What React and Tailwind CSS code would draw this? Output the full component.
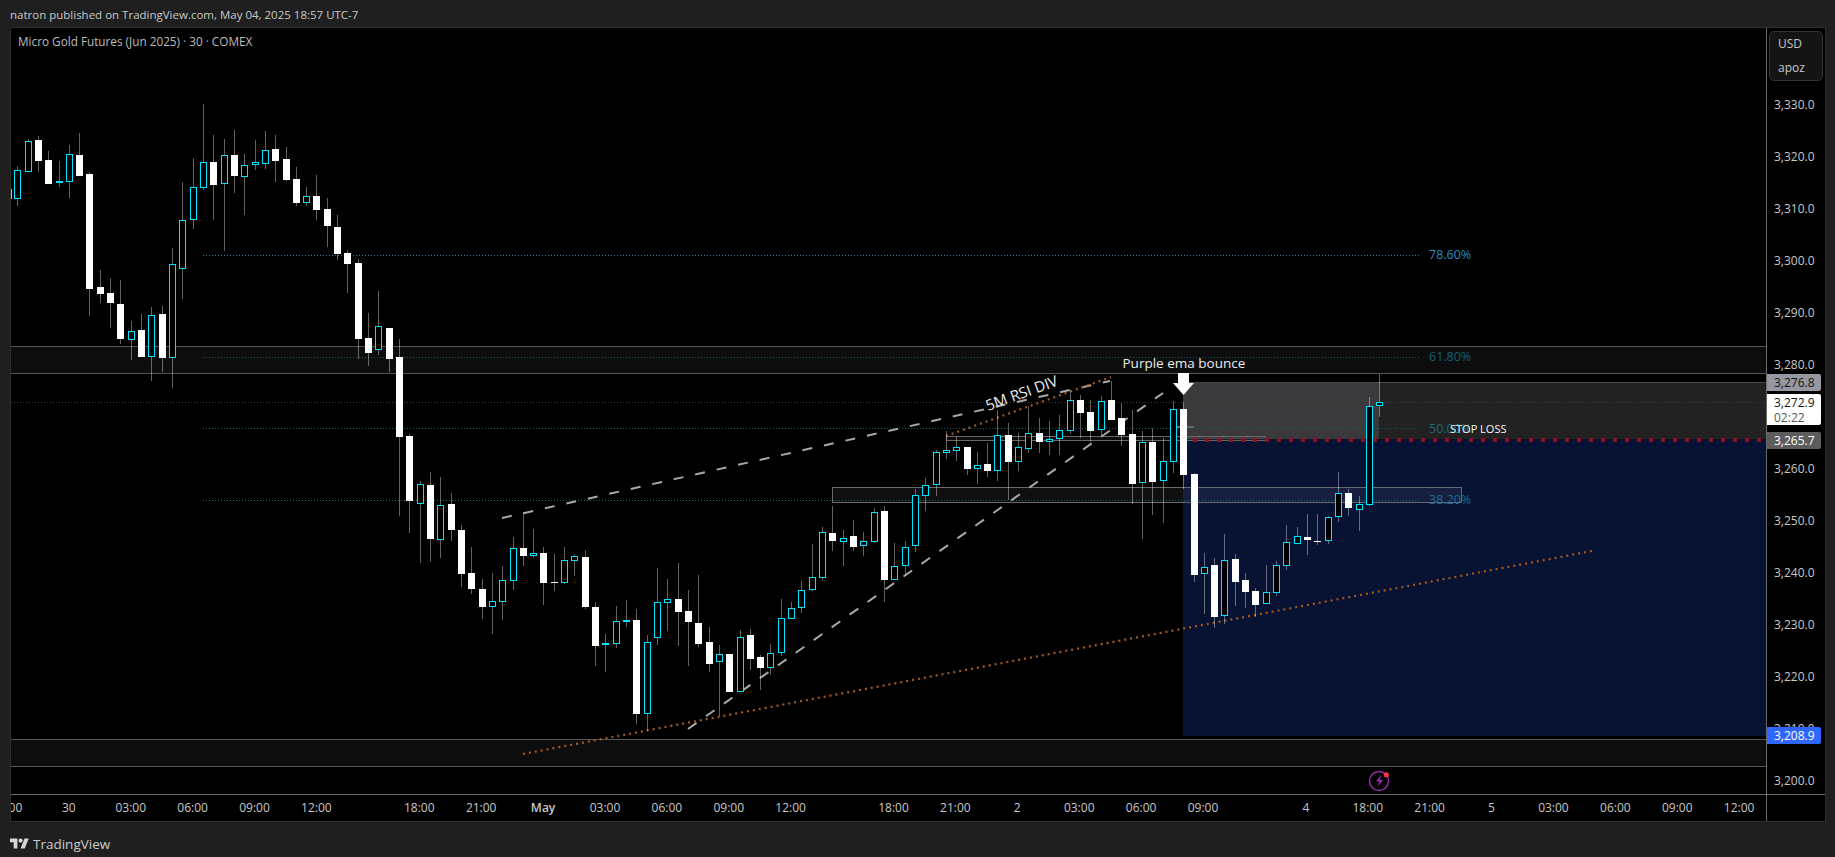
import React from 'react';

// wick top, body top, body bottom, wick bottom, 1 = up candle
const candles = [
  [166,170,199,206,1],[139,141,172,172,1],[136,140,161,172,0],[151,160,184,184,0],[161,181,183,187,1],
  [145,154,182,198,1],[133,155,176,176,0],[172,174,289,316,0],[270,287,294,303,0],[278,293,303,328,0],
  [280,304,339,344,0],[321,331,340,360,1],[314,330,357,357,0],[307,315,357,381,1],[306,314,358,372,0],
  [248,264,358,388,1],[182,220,269,299,1],[158,187,220,229,1],[104,162,188,190,1],[135,162,185,220,0],
  [139,155,184,251,1],[130,155,176,193,0],[154,165,177,215,1],[140,162,165,170,1],[131,150,164,169,1],
  [135,149,161,182,0],[147,159,180,181,0],[167,179,203,206,0],[187,196,203,206,1],[175,196,210,220,0],
  [198,209,226,247,0],[215,227,254,260,0],[250,253,264,293,0],[259,263,339,359,0],[313,338,353,366,0],
  [291,326,350,355,1],[328,328,359,372,0],[339,357,437,516,0],[434,436,501,533,0],[481,484,504,563,1],
  [472,485,539,562,0],[477,505,540,558,1],[493,504,530,541,0],[525,530,574,587,0],[547,573,589,594,0],
  [579,589,607,619,0],[573,601,607,634,1],[566,580,602,620,1],[537,548,581,590,1],[512,548,556,566,0],
  [529,553,556,558,1],[547,553,583,605,0],[554,582,583,591,0],[547,560,583,584,1],[555,556,561,576,1],
  [550,557,607,609,0],[602,607,646,666,0],[634,643,645,672,1],[606,621,644,648,1],[600,620,622,627,1],
  [609,620,714,724,0],[635,642,714,731,1],[568,602,638,645,1],[579,599,603,631,1],[563,599,612,646,0],
  [590,611,622,666,0],[575,623,644,647,0],[627,642,664,672,0],[645,654,662,716,1],[654,654,692,692,0],
  [630,637,692,692,1],[629,635,659,670,0],[655,657,668,690,0],[644,653,668,675,1],[599,618,653,656,1],
  [602,608,619,619,1],[581,590,608,613,1],[544,577,590,591,1],[527,532,578,580,1],[506,533,541,551,0],
  [530,538,542,566,1],[520,536,547,551,0],[532,541,546,556,1],[508,512,542,543,1],[506,511,580,602,0],
  [543,566,580,580,1],[541,547,566,575,1],[489,495,546,552,1],[478,485,496,511,1],[450,452,485,496,1],
  [431,450,453,459,1],[437,447,451,461,1],[447,447,469,475,0],[452,465,469,484,1],[443,464,471,477,0],
  [410,435,471,481,1],[423,435,462,500,0],[433,447,462,471,1],[406,433,449,453,1],[418,433,442,453,0],
  [421,439,442,455,1],[415,430,439,455,1],[391,400,431,434,1],[395,400,413,438,0],[400,412,431,442,0],
  [396,401,430,436,1],[381,400,420,420,0],[403,418,435,446,0],[410,434,484,504,0],[431,442,483,539,1],
  [428,442,482,515,0],[438,461,481,523,1],[401,409,462,473,1],[402,409,475,489,0],[473,474,575,582,0],
  [553,567,574,614,1],[558,565,617,628,0],[534,560,616,624,1],[554,559,582,606,0],[573,580,592,608,0],
  [588,591,605,617,0],[565,592,604,603,1],[561,565,593,596,1],[525,542,566,570,1],[527,536,544,544,1],
  [514,537,540,555,0],[514,541,542,545,0],[516,517,541,544,1],[472,493,517,522,1],[489,493,508,516,0],
  [496,504,510,531,1],[397,406,505,506,1],[374,402,406,417,1],
];

// 3,270.0 sits behind the live price tag in the chart, so its row stays empty
const prices = ['3,330.0','3,320.0','3,310.0','3,300.0','3,290.0','3,280.0','','3,260.0','3,250.0','3,240.0','3,230.0','3,220.0','3,210.0','3,200.0'];

const timeGroups = [
  ['12:00','30','03:00','06:00','09:00','12:00'],
  ['18:00','21:00','May','03:00','06:00','09:00','12:00'],
  ['18:00','21:00','2','03:00','06:00','09:00'],
  ['4','18:00','21:00','5','03:00','06:00','09:00','12:00'],
];

const fibs = [
  { y: 255, color: '#2a7ea6', label: '78.60%', labelY: 259, labelColor: '#2a8cc0' },
  { y: 357, color: '#0d5f66', label: '61.80%', labelY: 361, labelColor: '#0f6272' },
  { y: 428, color: '#0f5f66', label: '50.00%', labelY: 433, labelColor: '#1a6a78' },
  { y: 500, color: '#0f6a76', label: '38.20%', labelY: 504, labelColor: '#1b6f98' },
];

const stopDots = Array.from({ length: 48 }, (_, i) => 1193 + i * 12);

const Candle = ({ data, index }) => {
  const [wickTop, bodyTop, bodyBottom, wickBottom, up] = data;
  const x = Math.round(17.25 + 10.318 * index);
  return (
    <g>
      <rect x={x} y={wickTop} width="1" height={wickBottom - wickTop} fill="#ffffff" fillOpacity="0.38" />
      {up ? (
        <rect x={x - 2.5} y={bodyTop + 0.5} width="6" height={Math.max(bodyBottom - bodyTop - 1, 1)} fill="#000000" stroke="#00e5ff" />
      ) : (
        <rect x={x - 3} y={bodyTop} width="7" height={Math.max(bodyBottom - bodyTop, 1)} fill="#ffffff" />
      )}
    </g>
  );
};

const ChartDrawing = () => (
  <svg className="block" width="1755" height="766" viewBox="11 28 1755 766">
    {/* zones */}
    <g shapeRendering="crispEdges">
      <rect x="11" y="346" width="1755" height="27" fill="#0d0d0d" />
      <rect x="11" y="739" width="1755" height="27" fill="#0d0d0d" />
      <rect x="1183" y="382" width="196" height="57" fill="#3a3a3d" />
      <rect x="1379" y="382" width="387" height="57" fill="#222222" />
      <rect x="1183" y="382" width="583" height="1" fill="#4a4a4a" />
      <rect x="1183" y="439" width="583" height="297" fill="#081233" />
      <rect x="832.5" y="487.5" width="629" height="15" fill="#ffffff" fillOpacity="0.06" stroke="#666a70" />
      <rect x="946.5" y="436.5" width="319" height="4" fill="#ffffff" fillOpacity="0.05" stroke="#666666" />
      <rect x="1176" y="426" width="18" height="2" fill="#666666" />
      <rect x="11" y="346" width="1755" height="1" fill="#555555" />
      <rect x="11" y="373" width="1755" height="1" fill="#555555" />
      <rect x="11" y="739" width="1755" height="1" fill="#555555" />
      <rect x="11" y="766" width="1755" height="1" fill="#555555" />
      <line x1="11" y1="402.5" x2="1766" y2="402.5" stroke="#3c3c3c" strokeDasharray="1 2" />
      {fibs.map((f) => (
        <line key={f.y} x1="203" y1={f.y + 0.5} x2="1419" y2={f.y + 0.5} stroke={f.color} strokeDasharray="1 2" />
      ))}
      {stopDots.map((x) => (
        <rect key={x} x={x} y="438" width="4" height="4" fill="#8e1020" />
      ))}
    </g>

    {/* trend lines */}
    <line x1="502" y1="518" x2="1110" y2="381" stroke="#a8a8a8" strokeWidth="2" strokeDasharray="10 12" />
    <line x1="688" y1="729" x2="1163" y2="393" stroke="#a8a8a8" strokeWidth="2" strokeDasharray="10.5 11.5" />
    <line x1="523" y1="754" x2="1592" y2="551" stroke="#a85a1e" strokeWidth="2.2" strokeDasharray="2 4" />
    <line x1="946" y1="436" x2="1111" y2="377" stroke="#a85a1e" strokeWidth="2.2" strokeDasharray="2 4" />

    {/* candles */}
    <g shapeRendering="crispEdges">
      <rect x="11" y="189" width="1" height="10" fill="#bdbdbd" />
      {candles.map((c, i) => (
        <Candle key={i} data={c} index={i} />
      ))}
    </g>

    {/* annotations */}
    {fibs.map((f) => (
      <text key={f.label} x="1429" y={f.labelY} fill={f.labelColor} fontSize="12.5">{f.label}</text>
    ))}
    <text x="1450" y="433" fill="#f4f4f4" fontSize="11" fontWeight="500">STOP LOSS</text>
    <text x="1122.5" y="368" fill="#ececec" fontSize="13.5" fontWeight="500">Purple ema bounce</text>
    <text x="988" y="411" transform="rotate(-20 988 411)" fill="#ececec" fontSize="15" fontWeight="500">5M RSI DIV</text>
    <polygon points="1178,373 1189,373 1189,383 1194,383 1183.5,395 1173,383 1178,383" fill="#ffffff" />

    {/* bolt badge */}
    <circle cx="1379" cy="781" r="9.5" fill="none" stroke="#9c2fb0" strokeWidth="1.3" />
    <path d="M1381.5 774.5l-5.5 7h3.5l-2 5.5 5.5-7h-3.5z" fill="#9c2fb0" />
    <circle cx="1386.3" cy="774.8" r="2.6" fill="#f23645" />
  </svg>
);

const TvLogo = () => (
  <svg width="19" height="11" viewBox="0 4 36 19" fill="#d6d6d6">
    <path d="M14 23H7V11H0V4h14v19zM28 23h-8l7.5-19h8L28 23z" />
    <circle cx="20" cy="8" r="4" />
  </svg>
);

const PriceTag = ({ className, children }) => (
  <div className={`absolute left-0 w-[54px] pl-[7px] rounded-r-[2px] ${className}`}>{children}</div>
);

export default function App() {
  return (
    <div className="w-[1835px] h-[857px] overflow-hidden bg-[#1f1f1f] text-xs text-[#c8c8c8] font-['Open_Sans',sans-serif]">
      <div className="h-[27px] pl-[10px] pt-[2px] flex items-center text-[11.5px]">
        natron published on TradingView.com, May 04, 2025 18:57 UTC-7
      </div>

      <div className="ml-[10px] w-[1816px] h-[795px] border border-[#2e2e2e] bg-black flex flex-col">
        <div className="flex h-[766px]">
          <div className="relative w-[1755px] overflow-hidden">
            <ChartDrawing />
            <div className="absolute left-[7px] top-[6px] text-[11.75px] text-[#bcbcbc]">Micro Gold Futures (Jun 2025) · 30 · COMEX</div>
          </div>

          <div className="relative flex-1 border-l border-[#6a6a6a]">
            <div className="mx-[2px] mt-[3px] h-[50px] rounded-[5px] border border-[#333333] bg-[#141414] pl-[8px] leading-[24px]">
              <div>USD</div>
              <div>apoz</div>
            </div>
            <div className="-mt-[2px]">
              {prices.map((p, i) => (
                <div key={i} className="h-[52px] flex items-center pl-[7px]">{p}</div>
              ))}
            </div>
            <PriceTag className="top-[346px] h-[17px] bg-[#9598a1] text-[#131313] leading-[17px]">3,276.8</PriceTag>
            <PriceTag className="top-[366px] h-[31px] pt-[1px] bg-white text-[#131313] leading-[15px]">
              <div>3,272.9</div>
              <div className="text-[#555555]">02:22</div>
            </PriceTag>
            <PriceTag className="top-[404px] h-[17px] bg-[#5d5d5d] text-white leading-[17px]">3,265.7</PriceTag>
            <PriceTag className="top-[699px] h-[17px] bg-[#2f66ff] text-white leading-[17px]">3,208.9</PriceTag>
          </div>
        </div>

        <div className="flex h-[27px] border-t border-[#6a6a6a]">
          <div className="w-[1755px] overflow-hidden flex items-center">
            <div className="flex shrink-0 -ml-[35px] gap-[41px] pb-[1px]">
              {timeGroups.map((group, g) => (
                <div key={g} className="flex">
                  {group.map((t, i) => (
                    <div key={i} className={t === 'May' ? 'w-[61.9px] text-center font-semibold' : 'w-[61.9px] text-center'}>{t}</div>
                  ))}
                </div>
              ))}
            </div>
          </div>
          <div className="flex-1 border-l border-[#6a6a6a]" />
        </div>
      </div>

      <div className="pl-[10px] pt-[13px] flex items-center gap-[4px] text-[13.5px] text-[#cccccc]">
        <TvLogo />
        <span>TradingView</span>
      </div>
    </div>
  );
}
